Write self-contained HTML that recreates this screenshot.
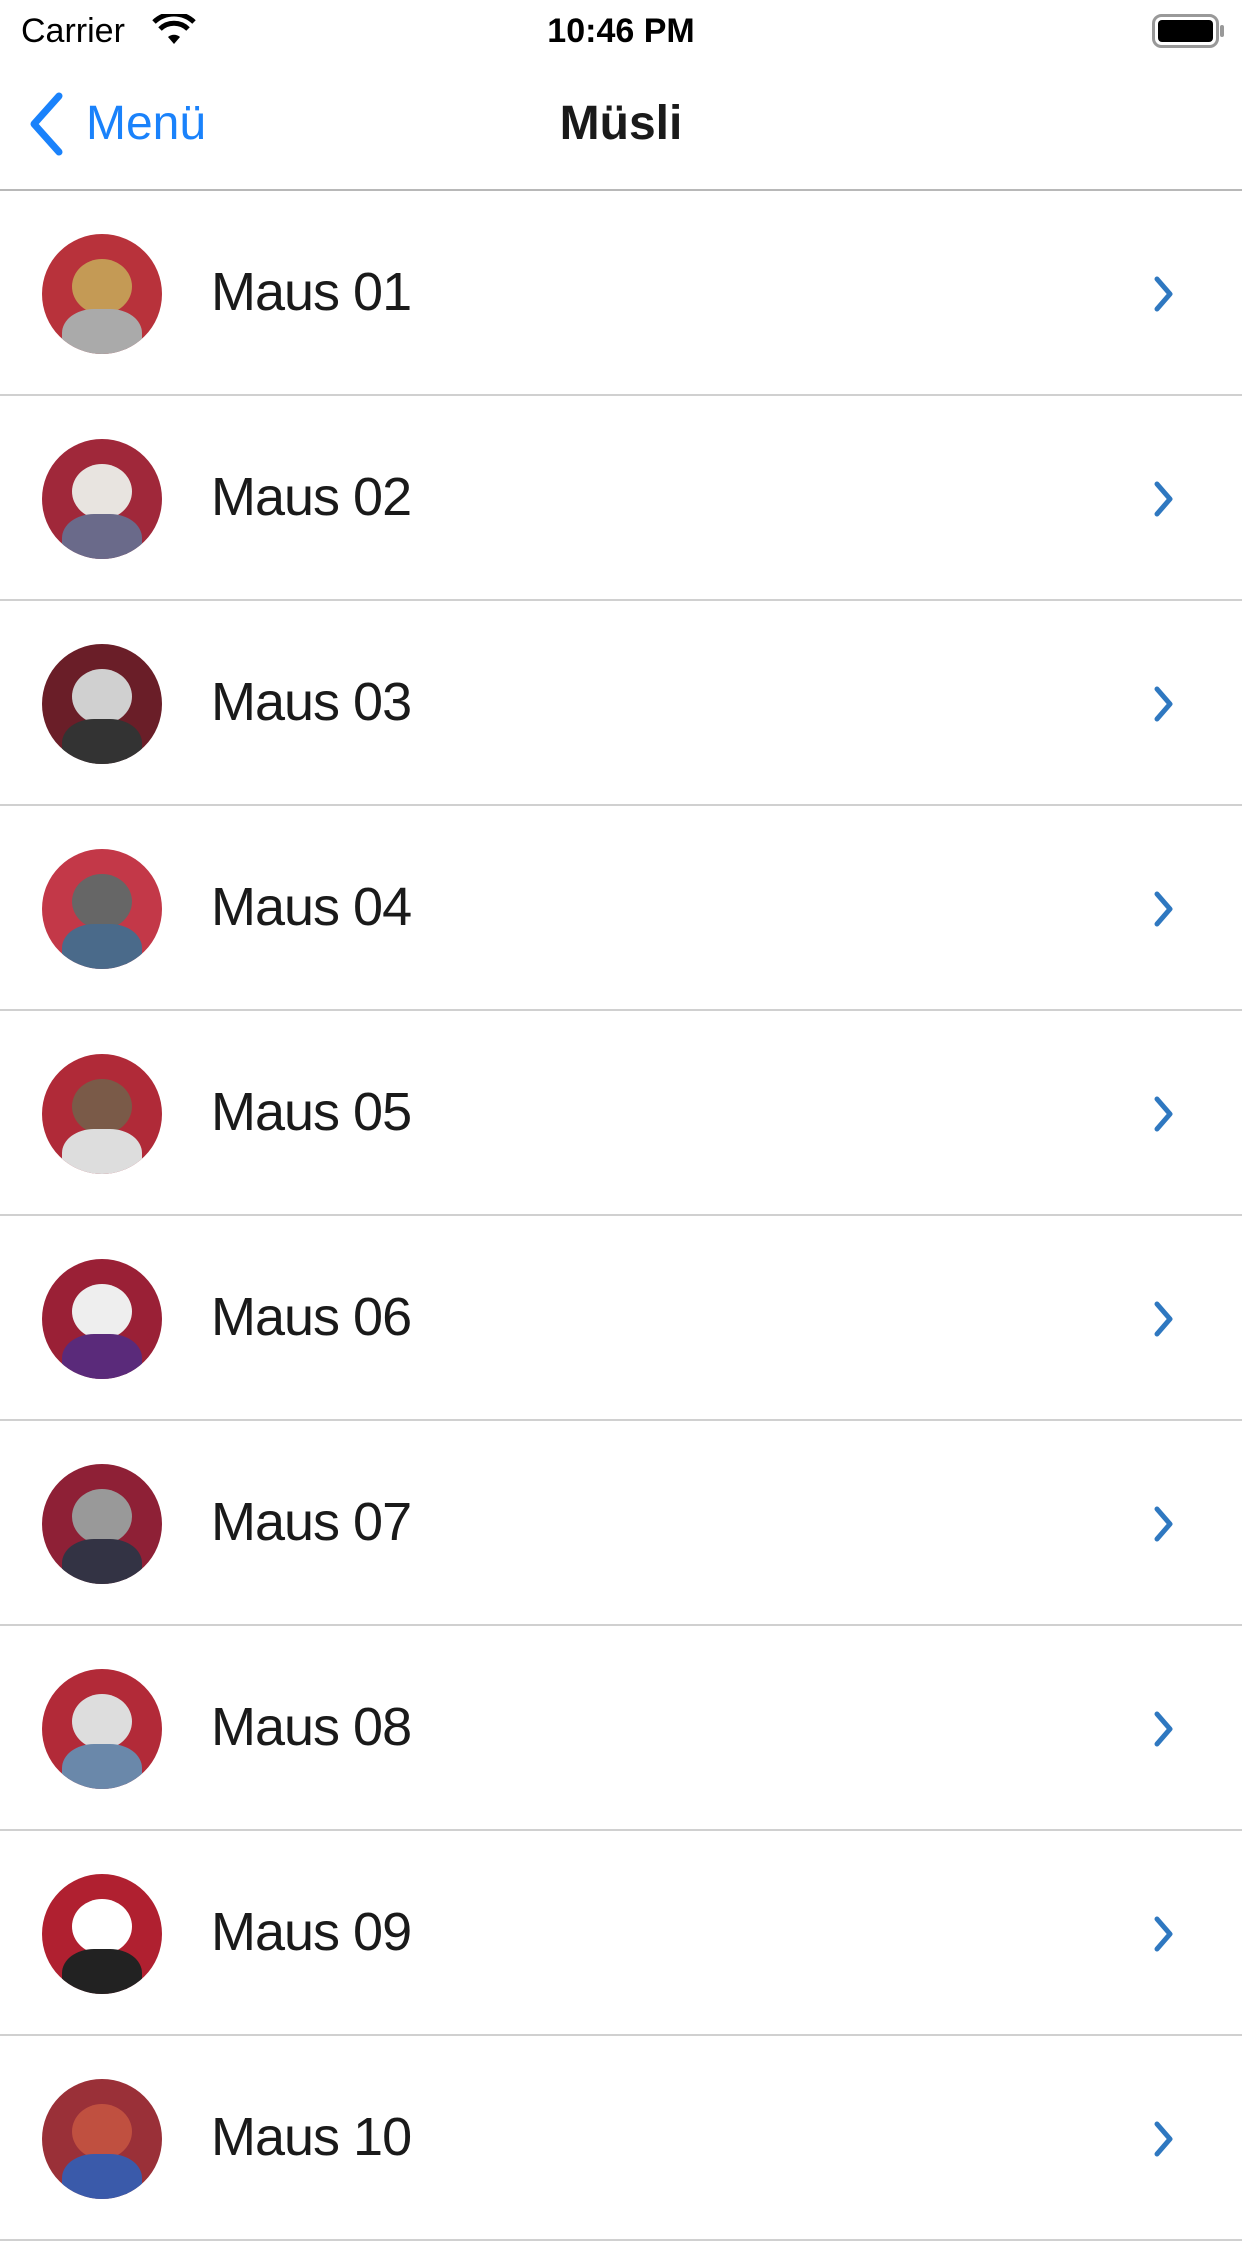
<!DOCTYPE html>
<html><head><meta charset="utf-8"><style>
*{margin:0;padding:0;box-sizing:border-box}
body{width:1242px;height:2208px;overflow:hidden;background:#fff;font-family:"Liberation Sans",sans-serif;position:relative}
.sb{position:absolute;top:0;left:0;width:1242px;height:62px}
.carrier{position:absolute;left:21px;top:12px;font-size:34px;color:#000}
.time{position:absolute;left:0;width:1242px;text-align:center;top:12px;font-size:34px;font-weight:bold;color:#000}
.nav{position:absolute;top:62px;left:0;width:1242px;height:129px;border-bottom:2px solid #b8b8b8}
.back{position:absolute;left:86px;top:34px;font-size:48px;color:#1a82fb}
.title{position:absolute;left:0;width:1242px;text-align:center;top:34px;font-size:48px;font-weight:bold;color:#1a1a1a}
.row{position:absolute;left:0;width:1242px;height:205px;border-bottom:2px solid #d0d0d0}
.av{position:absolute;left:42px;top:43px;width:120px;height:120px;border-radius:50%;overflow:hidden}
.lbl{position:absolute;left:211px;top:70px;font-size:54px;color:#1a1a1a;letter-spacing:-1px}
.chev{position:absolute;left:1153px;top:84px}
</style></head><body>
<div class="sb">
<div class="carrier">Carrier</div>
<svg style="position:absolute;left:152px;top:14px" width="44" height="32" viewBox="0 0 44 32"><path d="M22 30 L16 23 A9 9 0 0 1 28 23 Z" fill="#000"/><path d="M8 15 A20 20 0 0 1 36 15" stroke="#000" stroke-width="5" fill="none"/><path d="M2 8 A29 29 0 0 1 42 8" stroke="#000" stroke-width="5" fill="none"/></svg>
<div class="time">10:46 PM</div>
<svg style="position:absolute;left:1152px;top:14px" width="74" height="34" viewBox="0 0 74 34"><rect x="1.5" y="1.5" width="64" height="31" rx="8" fill="none" stroke="#999" stroke-width="3"/><rect x="6" y="6" width="55" height="22" rx="4" fill="#000"/><rect x="68" y="11" width="4" height="12" rx="2" fill="#999"/></svg>
</div>
<div class="nav">
<svg style="position:absolute;left:26px;top:30px" width="40" height="64" viewBox="0 0 40 64"><path d="M33 4 L8 32 L33 60" stroke="#1a82fb" stroke-width="7" fill="none" stroke-linecap="round" stroke-linejoin="round"/></svg>
<div class="back">Menü</div>
<div class="title">Müsli</div>
</div>
<div id="rows"></div>
<script>
var cols=[["#b8323b","#c49a55","#aaa"],["#a0283a","#e8e4e0","#6a6a8a"],["#6a1e28","#d0d0d0","#333"],["#c33848","#666","#4a6a8a"],["#b02a38","#7a5a48","#ddd"],["#9a2036","#eee","#5a2a7a"],["#8e2036","#999","#334"],["#b22a38","#ddd","#6a88aa"],["#b02030","#fff","#222"],["#9a3038","#c05040","#3a5aaa"]];
var h="";
for(var i=0;i<10;i++){var t=191+205*i;var c=cols[i];
h+='<div class="row" style="top:'+t+'px"><div class="av" style="background:'+c[0]+'"><div style="position:absolute;left:30px;top:25px;width:60px;height:55px;border-radius:50%;background:'+c[1]+'"></div><div style="position:absolute;left:20px;top:75px;width:80px;height:60px;border-radius:40%;background:'+c[2]+'"></div></div><div class="lbl">Maus '+(i<9?'0':'')+(i+1)+'</div><svg class="chev" width="22" height="38" viewBox="0 0 22 38"><path d="M4 4 L17 19 L4 34" stroke="#2f78c0" stroke-width="5" fill="none" stroke-linecap="round" stroke-linejoin="round"/></svg></div>';}
document.getElementById("rows").innerHTML=h;
</script>
</body></html>
